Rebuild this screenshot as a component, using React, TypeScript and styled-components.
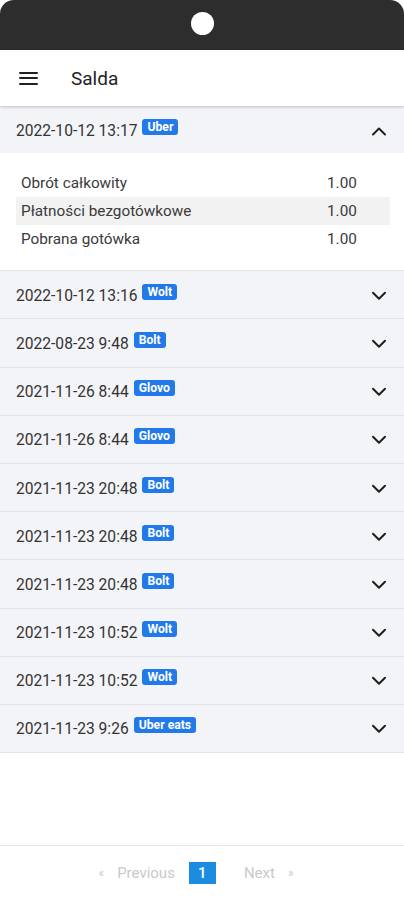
import React, { useState } from "react";
import styled, { createGlobalStyle } from "styled-components";

const GlobalStyle = createGlobalStyle`
  html, body { margin: 0; padding: 0; background: #ffffff; }
  body { font-family: Roboto, "Noto Sans", Arial, sans-serif; -webkit-font-smoothing: antialiased; }
  * { box-sizing: border-box; }
`;

const Page = styled.div`
  display: flex;
  flex-direction: column;
  min-height: 900px;
  background: #fff;
`;

const DeviceBar = styled.div`
  height: 50px;
  background: #2d2d2d;
  border-radius: 14px 14px 0 0;
  display: flex;
  align-items: center;
  justify-content: center;
`;

const Camera = styled.div`
  width: 23px;
  height: 23px;
  border-radius: 50%;
  background: #fff;
  margin-top: -4px;
`;

const AppBar = styled.header`
  height: 56px;
  display: flex;
  align-items: center;
  background: #fff;
  box-shadow: 0 1px 3px rgba(0, 0, 0, 0.22);
  position: relative;
  z-index: 1;
  padding-left: 19px;
`;

const MenuButton = styled.div`
  width: 19px;
  display: flex;
  flex-direction: column;
  gap: 3.5px;
  margin-right: 33px;
  span {
    display: block;
    height: 2px;
    background: #222;
    border-radius: 1px;
  }
`;

const Title = styled.h1`
  margin: 0;
  font-size: 19px;
  font-weight: 400;
  color: #222;
`;

const List = styled.div`
  flex: 1;
  display: flex;
  flex-direction: column;
`;

const Item = styled.div`
  border-bottom: 1px solid #e3e4e8;
`;

const ItemHeader = styled.div`
  height: 47.2px;
  background: #f3f4f8;
  display: flex;
  align-items: center;
  justify-content: space-between;
  padding: 2px 17px 0 16px;
  cursor: pointer;
`;

const DateText = styled.span`
  font-size: 15.6px;
  color: #333;
  display: flex;
  align-items: center;
`;

const Badge = styled.span`
  display: inline-block;
  margin-left: 5px;
  background: #2279ea;
  color: #fff;
  font-size: 12.2px;
  font-weight: 700;
  line-height: 14px;
  padding: 1px 5px;
  border-radius: 3px;
  transform: translateY(-4px);
`;

const Body = styled.div`
  background: #fff;
  padding: 16px 14px 17px 16px;
`;

const Row = styled.div<{ $striped?: boolean }>`
  display: grid;
  grid-template-columns: 1fr 68px;
  height: 28px;
  align-items: center;
  background: ${(p) => (p.$striped ? "#f2f2f2" : "transparent")};
  font-size: 15.3px;
  color: #3a3a3a;
  span {
    padding-left: 5px;
  }
`;

const Footer = styled.footer`
  height: 55px;
  border-top: 1px solid #e6e6e6;
  display: flex;
  align-items: center;
  justify-content: center;
  font-size: 15px;
  padding: 0 12px 1px 0;
`;

const PageLink = styled.span`
  color: #c9c9c9;
  display: inline-flex;
  align-items: center;
  gap: 13px;
  small {
    font-size: 12px;
  }
`;

const CurrentPage = styled.span`
  display: inline-flex;
  align-items: center;
  justify-content: center;
  width: 27px;
  height: 22px;
  margin: 0 28px 0 14px;
  background: #1a8de0;
  color: #fff;
  font-weight: 500;
`;

const Chevron = ({ up }: { up?: boolean }) => (
  <svg width="16" height="10" viewBox="0 0 16 10" fill="none">
    <path
      d={up ? "M2 8.5 L8 2.5 L14 8.5" : "M2 1.8 L8 7.8 L14 1.8"}
      stroke="#1f1f1f"
      strokeWidth="2"
      strokeLinecap="round"
      strokeLinejoin="round"
    />
  </svg>
);

const entries = [
  { date: "2022-10-12 13:17", src: "Uber" },
  { date: "2022-10-12 13:16", src: "Wolt" },
  { date: "2022-08-23 9:48", src: "Bolt" },
  { date: "2021-11-26 8:44", src: "Glovo" },
  { date: "2021-11-26 8:44", src: "Glovo" },
  { date: "2021-11-23 20:48", src: "Bolt" },
  { date: "2021-11-23 20:48", src: "Bolt" },
  { date: "2021-11-23 20:48", src: "Bolt" },
  { date: "2021-11-23 10:52", src: "Wolt" },
  { date: "2021-11-23 10:52", src: "Wolt" },
  { date: "2021-11-23 9:26", src: "Uber eats" },
];

const details = [
  ["Obrót całkowity", "1.00"],
  ["Płatności bezgotówkowe", "1.00"],
  ["Pobrana gotówka", "1.00"],
];

export default function App() {
  const [open, setOpen] = useState<number | null>(0);
  return (
    <>
      <GlobalStyle />
      <Page>
        <DeviceBar>
          <Camera />
        </DeviceBar>
        <AppBar>
          <MenuButton>
            <span />
            <span />
            <span />
          </MenuButton>
          <Title>Salda</Title>
        </AppBar>
        <List>
          {entries.map((e, i) => (
            <Item key={i}>
              <ItemHeader onClick={() => setOpen(open === i ? null : i)}>
                <DateText>
                  {e.date}
                  <Badge>{e.src}</Badge>
                </DateText>
                <Chevron up={open === i} />
              </ItemHeader>
              {open === i && (
                <Body>
                  {details.map(([label, value], j) => (
                    <Row key={j} $striped={j === 1}>
                      <span>{label}</span>
                      <span>{value}</span>
                    </Row>
                  ))}
                </Body>
              )}
            </Item>
          ))}
        </List>
        <Footer>
          <PageLink>
            <small>«</small>Previous
          </PageLink>
          <CurrentPage>1</CurrentPage>
          <PageLink>
            Next<small>»</small>
          </PageLink>
        </Footer>
      </Page>
    </>
  );
}
